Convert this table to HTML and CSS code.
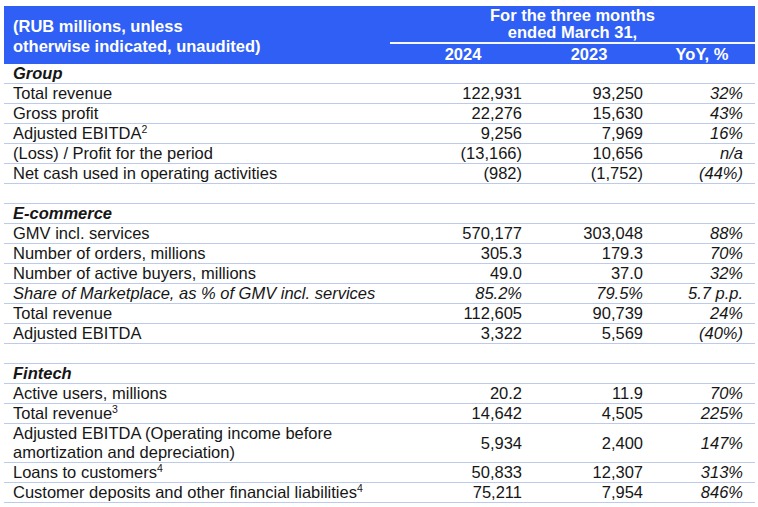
FILE: index.html
```html
<!DOCTYPE html>
<html>
<head>
<meta charset="utf-8">
<link rel="stylesheet" href="styles.css">
</head>
<body>
<table class="fin">
  <colgroup>
    <col class="c-label"><col class="c-a"><col class="c-b"><col class="c-c">
  </colgroup>
  <thead>
    <tr>
      <th class="h-label" rowspan="2">(RUB millions, unless<br>otherwise indicated, unaudited)</th>
      <th class="h-period" colspan="3">For the three months<br>ended March 31,</th>
    </tr>
    <tr class="h-years">
      <th class="y1">2024</th>
      <th class="y2">2023</th>
      <th class="y3">YoY, %</th>
    </tr>
  </thead>
  <tbody>
    <tr class="sec"><td>Group</td><td></td><td></td><td></td></tr>
    <tr><td>Total revenue</td><td class="n">122,931</td><td class="n">93,250</td><td class="p">32%</td></tr>
    <tr><td>Gross profit</td><td class="n">22,276</td><td class="n">15,630</td><td class="p">43%</td></tr>
    <tr><td>Adjusted EBITDA<sup>2</sup></td><td class="n">9,256</td><td class="n">7,969</td><td class="p">16%</td></tr>
    <tr><td>(Loss) / Profit for the period</td><td class="n">(13,166)</td><td class="n">10,656</td><td class="p">n/a</td></tr>
    <tr><td>Net cash used in operating activities</td><td class="n">(982)</td><td class="n">(1,752)</td><td class="p">(44%)</td></tr>
    <tr class="blank"><td></td><td></td><td></td><td></td></tr>
    <tr class="sec"><td>E-commerce</td><td></td><td></td><td></td></tr>
    <tr><td>GMV incl. services</td><td class="n">570,177</td><td class="n">303,048</td><td class="p">88%</td></tr>
    <tr><td>Number of orders, millions</td><td class="n">305.3</td><td class="n">179.3</td><td class="p">70%</td></tr>
    <tr><td>Number of active buyers, millions</td><td class="n">49.0</td><td class="n">37.0</td><td class="p">32%</td></tr>
    <tr class="it"><td>Share of Marketplace, as % of GMV incl. services</td><td class="n">85.2%</td><td class="n">79.5%</td><td class="p">5.7 p.p.</td></tr>
    <tr><td>Total revenue</td><td class="n">112,605</td><td class="n">90,739</td><td class="p">24%</td></tr>
    <tr><td>Adjusted EBITDA</td><td class="n">3,322</td><td class="n">5,569</td><td class="p">(40%)</td></tr>
    <tr class="blank"><td></td><td></td><td></td><td></td></tr>
    <tr class="sec"><td>Fintech</td><td></td><td></td><td></td></tr>
    <tr><td>Active users, millions</td><td class="n">20.2</td><td class="n">11.9</td><td class="p">70%</td></tr>
    <tr><td>Total revenue<sup>3</sup></td><td class="n">14,642</td><td class="n">4,505</td><td class="p">225%</td></tr>
    <tr class="tall"><td>Adjusted EBITDA (Operating income before<br>amortization and depreciation)</td><td class="n">5,934</td><td class="n">2,400</td><td class="p">147%</td></tr>
    <tr><td>Loans to customers<sup>4</sup></td><td class="n">50,833</td><td class="n">12,307</td><td class="p">313%</td></tr>
    <tr><td>Customer deposits and other financial liabilities<sup>4</sup></td><td class="n">75,211</td><td class="n">7,954</td><td class="p">846%</td></tr>
  </tbody>
</table>
</body>
</html>
```

FILE: styles.css
```css
html, body {
  margin: 0;
  padding: 0;
  background: #ffffff;
}

.fin {
  margin: 6px 0 0 4px;
  width: 751px;
  border-collapse: collapse;
  table-layout: fixed;
  font-family: "Liberation Sans", Arial, sans-serif;
  font-size: 16.5px;
  color: #161616;
}

.c-label { width: 386px; }
.c-a { width: 144px; }
.c-b { width: 121px; }
.c-c { width: 100px; }

.fin th {
  background: #2f5ff4;
  color: #ffffff;
  font-weight: bold;
  padding: 0;
}

.h-label {
  text-align: left;
  vertical-align: middle;
  line-height: 20px;
  padding: 2px 0 0 9px !important;
}

.h-period {
  text-align: center;
  line-height: 17px;
  height: 35px;
  padding: 1px 0 0 0 !important;
  vertical-align: top;
  border-bottom: 2px solid #f4f7ff;
}

.h-years th {
  height: 20px;
  line-height: 20px;
  text-align: center;
}

.h-years .y1 { padding: 0 0 0 2px; }
.h-years .y2 { padding: 0 11px 0 0; }
.h-years .y3 { padding: 0 6px 0 0; }

.fin td {
  padding: 0;
  height: 19px;
  line-height: 19px;
  border-bottom: 1px solid #bccbe9;
  white-space: nowrap;
}

.fin td:first-child {
  padding-left: 9px;
}

.fin td.n {
  text-align: right;
  padding-right: 12px;
}

.fin td.p {
  text-align: right;
  padding-right: 12px;
  font-style: italic;
}

.sec td {
  font-weight: bold;
  font-style: italic;
}

.it td {
  font-style: italic;
}

.tall td {
  height: 38px;
  line-height: 19px;
  vertical-align: middle;
}

.fin sup {
  font-size: 10.5px;
  line-height: 0;
  vertical-align: 6px;
}
```
